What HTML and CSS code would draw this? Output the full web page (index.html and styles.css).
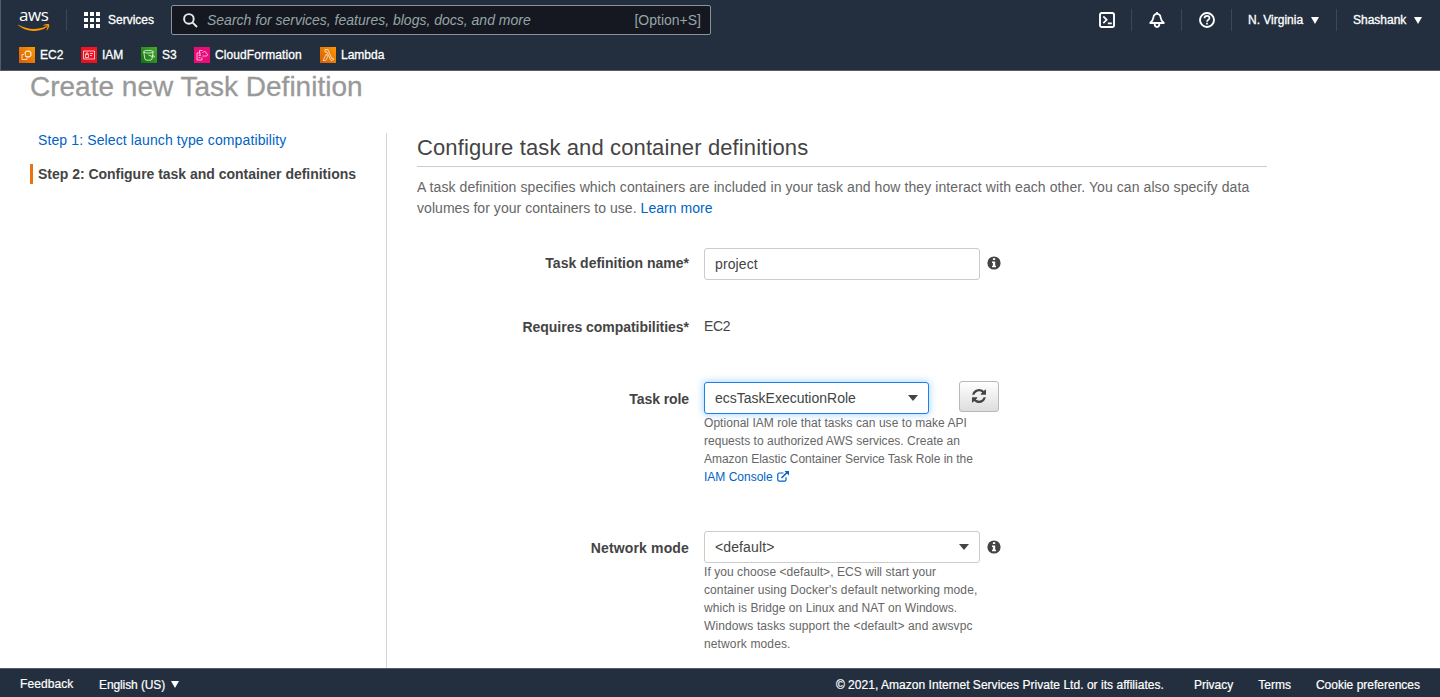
FILE: index.html
```html
<!DOCTYPE html>
<html lang="en">
<head>
<meta charset="utf-8">
<title>Create new Task Definition</title>
<link rel="stylesheet" href="styles.css">
</head>
<body>
<div class="app">
  <header class="header">
    <div class="topbar">
      <div class="logo">
        <span class="logo-text">aws</span>
        <svg class="logo-smile" width="32" height="8" viewBox="0 0 32 8"><path d="M0.4 0.7C8.5 5.6 19.5 6.3 28 2.2c.9-.4 1.5.4.7 1C20.500 8.600 8 8.500.2 1.300c-.4-.4-.2-.8.2-.6z" fill="#f90"/><path d="M25.600.900C27.500-.1 30.600-.1 31.100.500c.5.900-.3 4-2.100 5.700-.4.300-.7.100-.5-.3.500-1.200 1.300-3.400.9-4-.4-.5-2.500-.3-3.600-.2-.5 0-.6-.5-.2-.8z" fill="#f90"/></svg>
      </div>
      <span class="sep sep-logo"></span>
      <div class="services">
        <svg width="16" height="16" viewBox="0 0 16 16" fill="#fff"><path d="M0 0h4v4H0zM6 0h4v4H6zM12 0h4v4h-4zM0 6h4v4H0zM6 6h4v4H6zM12 6h4v4h-4zM0 12h4v4H0zM6 12h4v4H6zM12 12h4v4h-4z"/></svg>
        <span class="services-label">Services</span>
      </div>
      <div class="search">
        <svg width="15" height="15" viewBox="0 0 15 15" fill="none" stroke="#e8eded" stroke-width="1.900"><circle cx="5.900" cy="5.900" r="4.800"/><path d="M9.400 9.400l4.600 4.600"/></svg>
        <span class="search-hint">Search for services, features, blogs, docs, and more</span>
        <span class="search-key">[Option+S]</span>
      </div>
      <div class="tools">
        <span class="tool"><svg width="16" height="16" viewBox="0 0 16 16" fill="none" stroke="#fff" stroke-width="1.900"><rect x="1" y="1" width="14" height="14" rx="1.800"/><path d="M4.300 4.300L7.700 7.800 4.300 11.200M8.800 11.300h4" stroke-width="1.700"/></svg></span>
        <span class="sep"></span>
        <span class="tool"><svg width="16" height="16" viewBox="0 0 16 16" fill="none" stroke="#fff" stroke-width="1.800" stroke-linejoin="round"><path d="M8 1.800C5.800 1.800 4.600 3.400 4.400 5.500 4.200 7.700 3 9.300 1.200 11h13.600C13 9.300 11.800 7.700 11.600 5.500 11.400 3.400 10.200 1.800 8 1.800zM5.600 11.500c0 2 .9 3.500 2.400 3.500s2.400-1.500 2.400-3.500M8 0v2"/></svg></span>
        <span class="sep"></span>
        <span class="tool"><svg width="16" height="16" viewBox="0 0 16 16" fill="none" stroke="#fff" stroke-width="1.900"><circle cx="8" cy="8" r="7"/><path d="M5.500 6.300C5.500 4.800 6.600 3.900 8 3.900s2.500.8 2.500 2.200C10.500 7.800 8 7.700 8 9.700M8 10.800v1.700" stroke-width="1.700"/></svg></span>
        <span class="sep"></span>
        <span class="menu region"><span class="menu-label">N. Virginia</span><i class="tri"></i></span>
        <span class="sep"></span>
        <span class="menu account"><span class="menu-label">Shashank</span><i class="tri"></i></span>
      </div>
    </div>
    <nav class="favorites">
      <a class="fav f-ec2"><svg width="16" height="16" viewBox="0 0 16 16"><defs><linearGradient id="or" x1="0" y1="1" x2="1" y2="0"><stop stop-color="#d45b07"/><stop offset="1" stop-color="#ff9900"/></linearGradient></defs><path d="M0 0h16v16H0z" fill="url(#or)"/><path d="M6.500 4.500h5v5h-5zM5 7.500H3v5h5v-2M8 3v1.500M10 3v1.500M11.500 6H13M11.500 8H13M8 9.500V11M10 9.500V11M5 6h1.500" fill="none" stroke="#fff" stroke-opacity=".8" stroke-width=".9"/></svg><span>EC2</span></a>
      <a class="fav f-iam"><svg width="16" height="16" viewBox="0 0 16 16"><defs><linearGradient id="rd" x1="0" y1="1" x2="1" y2="0"><stop stop-color="#d9121f"/><stop offset="1" stop-color="#ff1420"/></linearGradient></defs><path d="M0 0h16v16H0z" fill="url(#rd)"/><path d="M2.500 4h11v8h-11zM4.500 7.500h3v3h-3zM5 7.500V6h2v1.500M9 6.500h3M9 8.500h2" fill="none" stroke="#fff" stroke-opacity=".8" stroke-width=".9"/></svg><span>IAM</span></a>
      <a class="fav f-s3"><svg width="16" height="16" viewBox="0 0 16 16"><defs><linearGradient id="gr" x1="0" y1="1" x2="1" y2="0"><stop stop-color="#10740f"/><stop offset="1" stop-color="#4aaa2e"/></linearGradient></defs><path d="M0 0h16v16H0z" fill="url(#gr)"/><path d="M2.700 4.700c0-1.700 9.500-1.700 9.500 0s-9.500 1.700-9.500 0L4 12.300c.6 1.300 6.300 1.300 6.900 0L12.200 4.700M7.500 8l5 2c1.500.4 1.300-.7-.7-2.200" fill="none" stroke="#fff" stroke-opacity=".85" stroke-width=".9"/></svg><span>S3</span></a>
      <a class="fav f-cf"><svg width="16" height="16" viewBox="0 0 16 16"><path d="M0 0h16v16H0z" fill="#ed0b79"/><path d="M5.500 6H3v7h5v-2.500M4.500 8.300h2M4.500 10.500h2M5.500 6V3.500h3M6 9V5.500M8.500 9H12c2 0 2-2.300.4-2.500C12.200 4 9.200 3.800 8.700 6" fill="none" stroke="#fff" stroke-opacity=".75" stroke-width=".9"/></svg><span class="t-cf">CloudFormation</span></a>
      <a class="fav"><svg width="16" height="16" viewBox="0 0 16 16"><path d="M0 0h16v16H0z" fill="url(#or)"/><path d="M5 2.500h2.800l4 9 1.200-.5.700 1.700-2.700.8-4-8.500H5zM6.500 7l1.200 2.500-1.900 4H3z" fill="none" stroke="#fff" stroke-opacity=".85" stroke-width=".8"/></svg><span>Lambda</span></a>
    </nav>
  </header>

  <main class="main">
    <h1 class="title">Create new Task Definition</h1>
    <div class="columns">
      <aside class="steps">
        <a class="step t-step1">Step 1: Select launch type compatibility</a>
        <div class="step step-current">Step 2: Configure task and container definitions</div>
      </aside>
      <section class="content">
        <h2 class="subtitle">Configure task and container definitions</h2>
        <p class="intro"><span class="t-intro1">A task definition specifies which containers are included in your task and how they interact with each other. You can also specify data</span><br><span class="t-intro2">volumes for your containers to use. <a class="link">Learn more</a></span></p>
        <div class="row row-name">
          <label class="label">Task definition name*</label>
          <div class="input wide"><span class="t-project">project</span></div>
          <svg class="info" width="14" height="14" viewBox="0 0 14 14"><circle cx="7" cy="7" r="6.600" fill="#444"/><path d="M5.900 2.300h2.300v1.800H5.900zM5 5.400h3.200v4.300H9v1.500H5V9.700h.9V6.900H5z" fill="#fff"/></svg>
        </div>
        <div class="row row-compat">
          <label class="label t-compat">Requires compatibilities*</label>
          <span class="value">EC2</span>
        </div>
        <div class="row row-role">
          <label class="label t-role">Task role</label>
          <div class="field">
            <div class="role-line">
              <div class="input focus"><span>ecsTaskExecutionRole</span><i class="caret"></i></div>
              <button class="refresh" aria-label="Refresh"><svg width="14" height="14" viewBox="0 0 1536 1536"><path fill="#444" d="M1511 928q0 5-1 7-64 268-268 434.500T764 1536q-146 0-282.500-55T238 1324l-129 129q-19 19-45 19t-45-19-19-45V960q0-26 19-45t45-19h448q26 0 45 19t19 45-19 45l-137 137q71 66 161 102t187 36q134 0 250-65t186-179q11-17 53-117 8-23 30-23h192q13 0 22.500 9.500t9.500 22.500zm25-800v448q0 26-19 45t-45 19h-448q-26 0-45-19t-19-45 19-45l138-138Q969 256 768 256q-134 0-250 65T332 500q-11 17-53 117-8 23-30 23H50q-13 0-22.500-9.500T18 608v-7q65-268 270-434.500T768 0q146 0 284 55.500T1297 212l130-129q19-19 45-19t45 19 19 45z"/></svg></button>
            </div>
            <p class="help"><span class="t-r1">Optional IAM role that tasks can use to make API</span><br><span class="t-r2">requests to authorized AWS services. Create an</span><br><span class="t-r3">Amazon Elastic Container Service Task Role in the</span><br><a class="link">IAM Console</a><svg class="ext" width="12" height="11" viewBox="0 0 12 11" fill="none" stroke="#0063c6" stroke-width="1.200"><path d="M6.500 2H2.200Q.8 2 .8 3.400v5.300q0 1.400 1.400 1.400h5.400Q9 10.100 9 8.700V6.200"/><path d="M4.500 7L10 1.500" stroke-width="1.600"/><path d="M7.500 0H12v4.500z" fill="#0063c6" stroke="none"/></svg></p>
          </div>
        </div>
        <div class="row row-net">
          <label class="label t-net">Network mode</label>
          <div class="field">
            <div class="net-line">
              <div class="input wide"><span class="t-def">&lt;default&gt;</span><i class="caret"></i></div>
              <svg class="info" width="14" height="14" viewBox="0 0 14 14"><circle cx="7" cy="7" r="6.600" fill="#444"/><path d="M5.900 2.300h2.300v1.800H5.900zM5 5.400h3.200v4.300H9v1.500H5V9.700h.9V6.900H5z" fill="#fff"/></svg>
            </div>
            <p class="help"><span class="t-n1">If you choose &lt;default&gt;, ECS will start your</span><br><span class="t-n2">container using Docker's default networking mode,</span><br><span class="t-n3">which is Bridge on Linux and NAT on Windows.</span><br><span class="t-n4">Windows tasks support the &lt;default&gt; and awsvpc</span><br><span class="t-n5">network modes.</span></p>
          </div>
        </div>
      </section>
    </div>
  </main>

  <footer class="footer">
    <a class="feedback">Feedback</a>
    <span class="language"><span class="t-lang">English (US)</span><i class="tri"></i></span>
    <span class="copyright">© 2021, Amazon Internet Services Private Ltd. or its affiliates.</span>
    <a class="f-privacy">Privacy</a>
    <a class="f-terms">Terms</a>
    <a class="f-cookie">Cookie preferences</a>
  </footer>
</div>
</body>
</html>
```
FILE: styles.css
```css
* { box-sizing: border-box; }
body {
  margin: 0;
  font-family: "Liberation Sans", Arial, sans-serif;
  font-size: 14px;
  color: #444;
  background: #fff;
}
.app { display: flex; flex-direction: column; height: 697px; overflow: hidden; }
svg { display: block; flex: none; }
span, a, label { white-space: nowrap; }
h1, h2, p { margin: 0; font-weight: normal; }

.header { flex: none; height: 71px; background: #232f3e; color: #fff; border-bottom: 1px solid #545b64; border-left: 1px solid #545b64; }
.topbar { display: flex; align-items: center; height: 40px; }
.logo { width: 32px; margin-left: 17px; padding-top: 1px; }
.logo-text { display: block; height: 14px; padding-left: 1px; font: 500 17px/10px "Open Sans", sans-serif; letter-spacing: -0.4px; }
.sep { flex: none; width: 1px; height: 22px; background: #414750; }
.sep-logo { margin-left: 16px; }
.services { display: flex; align-items: center; margin-left: 17px; }
.services-label { margin-left: 8px; width: 63px; font-size: 12px; -webkit-text-stroke: .3px; }
.search { display: flex; align-items: center; width: 540px; height: 30px; padding: 0 9px 0 11px; background: #161821; border: 1px solid #879596; border-radius: 2px; color: #95a5a6; }
.search-hint { margin-left: 9px; font-style: italic; }
.search-key { margin-left: auto; }
.tools { display: flex; align-items: center; margin-left: auto; height: 40px; font-size: 12px; }
.tool { display: flex; justify-content: center; width: 49px; }
.menu { display: flex; align-items: center; justify-content: space-between; -webkit-text-stroke: .3px; }
.region { width: 104px; padding: 0 17px 0 16px; }
.account { width: 103px; padding: 0 18px 0 16px; }
.tri { flex: none; width: 0; height: 0; border: solid transparent; border-width: 7px 4px 0; border-top-color: #fff; }
.favorites { display: flex; padding-left: 18px; height: 30px; align-items: center; font-size: 12px; -webkit-text-stroke: .3px; }
.fav { display: flex; align-items: center; gap: 5px; }
.f-ec2 { width: 62px; }
.f-iam { width: 60px; }
.f-s3 { width: 53px; }
.f-cf { width: 126px; }
.t-cf { letter-spacing: .1px; }

.main { flex: 1; min-height: 0; padding-left: 30px; overflow: hidden; }
.title { height: 62px; font-size: 28px; line-height: 31px; color: #999; -webkit-text-stroke: .3px; }
.columns { display: flex; height: 536px; }
.steps { width: 357px; border-right: 1px solid #d5d5d5; }
.step { display: block; height: 20px; line-height: 20px; padding-left: 8px; margin-bottom: 14px; margin-top: -3px; color: #0063c6; }
.step-current { margin-top: 0; padding-left: 5px; border-left: 3px solid #ec7211; font-weight: bold; color: #444; letter-spacing: -.02px; }
.t-step1 { letter-spacing: .12px; }
.content { width: 850px; margin-left: 30px; }
.subtitle { height: 34px; border-bottom: 1px solid #ccc; font-size: 22px; line-height: 30px; letter-spacing: .12px; }
.intro { margin-top: 10px; line-height: 21px; color: #666; }
.t-intro1 { letter-spacing: .083px; }
.t-intro2 { letter-spacing: .05px; }
.link { color: #0063c6; }
.row { display: flex; }
.label { width: 272px; margin-right: 15px; text-align: right; font-weight: bold; line-height: 20px; }
.t-compat { letter-spacing: -.03px; }
.t-role { letter-spacing: -.08px; }
.t-net { letter-spacing: .15px; }
.t-project, .t-def { letter-spacing: .12px; }
.input { display: flex; align-items: center; justify-content: space-between; height: 32px; padding: 0 10px; border: 1px solid #ccc; border-radius: 3px; background: #fff; }
.wide { width: 276px; }
.info { margin: 8px 0 0 7px; }
.caret { width: 0; height: 0; border: solid transparent; border-width: 6px 5px 0; border-top-color: #444; }
.row-name { margin-top: 29px; height: 68px; }
.row-name .label { padding-top: 5px; }
.row-compat { height: 66px; }
.row-compat .label { padding-top: 1px; }
.row-compat .value { line-height: 20px; letter-spacing: -.3px; }
.row-role { height: 149px; }
.row-role .label, .row-net .label { padding-top: 7px; }
.role-line, .net-line { display: flex; height: 32px; }
.net-line .info { margin-top: 9px; }
.focus { width: 225px; border-color: #1a82e8; box-shadow: 0 0 7px 1px rgba(30, 140, 255, .35); }
.refresh { display: flex; align-items: center; justify-content: center; width: 40px; height: 31px; margin: -1px 0 0 30px; padding: 0 0 1px; border: 1px solid #b8b8b8; border-radius: 3px; background: linear-gradient(#fff, #ddd); }
.help { font-size: 12px; line-height: 18px; color: #666; }
.t-r1 { letter-spacing: .045px; }
.t-r2 { letter-spacing: .02px; }
.t-r3 { letter-spacing: -.02px; }
.t-n1 { letter-spacing: .06px; }
.t-n2 { letter-spacing: .1px; }
.t-n3 { letter-spacing: .05px; }
.t-n4 { letter-spacing: .11px; }
.t-n5 { letter-spacing: .13px; }
.ext { display: inline-block; margin-left: 4px; vertical-align: -1px; }

.footer { flex: none; display: flex; align-items: center; height: 29px; padding: 3px 20px 0 20px; background: #232f3e; border-top: 1px solid #545b64; color: #fff; font-size: 12px; -webkit-text-stroke: .2px; }
.feedback { width: 79px; padding-bottom: 2px; letter-spacing: .08px; }
.language { display: flex; align-items: center; gap: 6px; }
.t-lang { letter-spacing: -.1px; }
.copyright { margin-left: auto; letter-spacing: .03px; }
.f-privacy { margin-left: 30px; }
.f-terms { margin-left: 25px; }
.f-cookie { margin-left: 25px; }
```
